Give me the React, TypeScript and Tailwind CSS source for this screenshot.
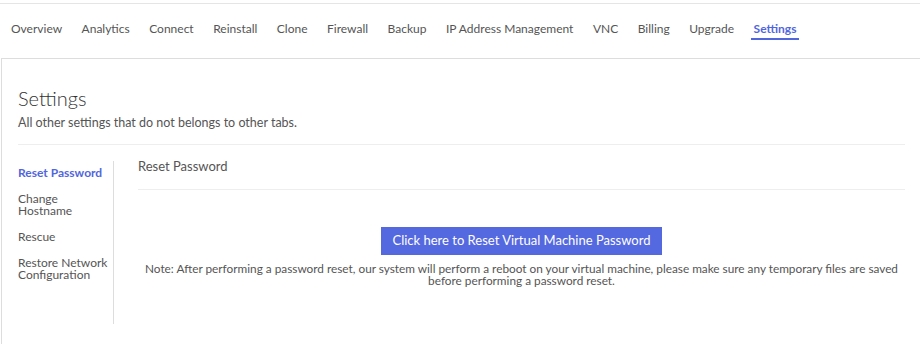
import React from "react";

const tabs = ["Overview","Analytics","Connect","Reinstall","Clone","Firewall","Backup","IP Address Management","VNC","Billing","Upgrade","Settings"];

export default function App() {
  return (
    <div className="w-[920px] h-[344px] bg-white overflow-hidden text-[#555]" style={{fontFamily: 'Lato, sans-serif'}}>
      <div className="mt-[3px] border-t border-[#e5e5e5]">
        <div className="flex items-start gap-[19.5px] pl-[11px] h-[54px] pt-[16px] text-[12px]">
          {tabs.map(t => t === "Settings" ? (
            <div key={t} className="flex flex-col">
              <span className="text-[#5166dd] font-bold leading-[17px]">{t}</span>
              <span className="h-[2px] bg-[#5166dd] mt-[1px] -mx-[3px]"></span>
            </div>
          ) : (
            <span key={t} className="leading-[17px]">{t}</span>
          ))}
        </div>
      </div>
      <div className="border-t border-l border-[#ddd] ml-[1px] h-[300px] pl-[16px] pr-[15px]">
        <h1 className="text-[20px] font-light text-[#333] mt-[26px] leading-[26px]">Settings</h1>
        <p className="text-[12.5px] leading-[18px] mt-[3px]">All other settings that do not belongs to other tabs.</p>
        <div className="border-t border-[#eee] mt-[12px]"></div>
        <div className="flex mt-[12px]">
          <div className="w-[96px] mt-[4px] border-r border-[#ddd] h-[163px] text-[12px] leading-[12px]">
            <div className="mt-[6px] text-[#5166dd] font-bold">Reset Password</div>
            <div className="mt-[14px]">Change<br/>Hostname</div>
            <div className="mt-[14px]">Rescue</div>
            <div className="mt-[14px]">Restore Network<br/>Configuration</div>
          </div>
          <div className="flex-1 pl-[24px]">
            <div className="text-[13px] leading-[18px] pb-[14px] border-b border-[#eee]">Reset Password</div>
            <div className="flex flex-col items-center mt-[37px]">
              <button className="bg-[#5468df] text-white text-[13px] h-[28px] w-[281px]">Click here to Reset Virtual Machine Password</button>
              <p className="text-[11.8px] leading-[12px] text-center mt-[8px]">Note: After performing a password reset, our system will perform a reboot on your virtual machine, please make sure any temporary files are saved<br/>before performing a password reset.</p>
            </div>
          </div>
        </div>
      </div>
    </div>
  );
}
